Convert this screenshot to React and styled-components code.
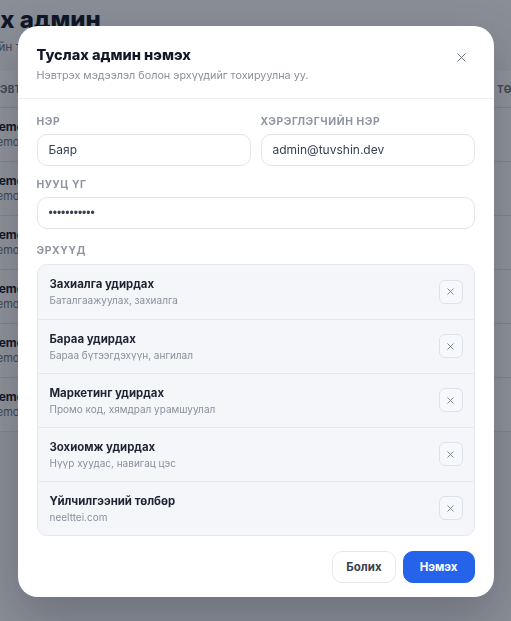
import styled, { createGlobalStyle } from 'styled-components';
import { X } from 'lucide-react';

const permissions = [
  { title: 'Захиалга удирдах', note: 'Баталгаажуулах, захиалга' },
  { title: 'Бараа удирдах', note: 'Бараа бүтээгдэхүүн, ангилал' },
  { title: 'Маркетинг удирдах', note: 'Промо код, хямдрал урамшуулал' },
  { title: 'Зохиомж удирдах', note: 'Нүүр хуудас, навигац цэс' },
  { title: 'Үйлчилгээний төлбөр', note: 'neelttei.com' },
];

const admins = [1, 2, 3, 4, 5, 6];

const GlobalStyle = createGlobalStyle`
  * { box-sizing: border-box; }
  body {
    margin: 0;
    overflow: hidden;
    background: #f6f7f9;
    font-family: Inter, 'Noto Sans', sans-serif;
  }
`;

const App = () => {
  return (
    <>
      <GlobalStyle />
      <Page>
        <PageTitle>Туслах админ</PageTitle>
        <PageSub>Админ эрхийн тохиргоо</PageSub>
        <Table>
          <HeadRow>
            <HeadCell>Нэвтрэх нэр</HeadCell>
            <HeadCell>Төлөв</HeadCell>
          </HeadRow>
          {admins.map((id) => (
            <BodyRow key={id}>
              <Avatar />
              <div>
                <RowName>Demo админ</RowName>
                <RowMail>demo@tuvshin.dev</RowMail>
              </div>
            </BodyRow>
          ))}
        </Table>
      </Page>

      <Overlay>
        <Modal>
          <Header>
            <div>
              <Title>Туслах админ нэмэх</Title>
              <Subtitle>Нэвтрэх мэдээлэл болон эрхүүдийг тохируулна уу.</Subtitle>
            </div>
            <CloseButton aria-label='Хаах'>
              <X size={15} strokeWidth={1.6} />
            </CloseButton>
          </Header>

          <Body>
            <FieldGrid>
              <Field>
                <Label>Нэр</Label>
                <Input defaultValue='Баяр' />
              </Field>
              <Field>
                <Label>Хэрэглэгчийн нэр</Label>
                <Input defaultValue='admin@tuvshin.dev' />
              </Field>
              <Field $wide>
                <Label>Нууц үг</Label>
                <Input type='password' defaultValue='12345678901' />
              </Field>
            </FieldGrid>

            <Section>
              <Label>Эрхүүд</Label>
              <PermList>
                {permissions.map((p) => (
                  <PermRow key={p.title}>
                    <div>
                      <PermTitle>{p.title}</PermTitle>
                      <PermNote>{p.note}</PermNote>
                    </div>
                    <RemoveButton aria-label='Хасах'>
                      <X size={11} strokeWidth={1.8} />
                    </RemoveButton>
                  </PermRow>
                ))}
              </PermList>
            </Section>

            <Footer>
              <Button>Болих</Button>
              <Button $primary>Нэмэх</Button>
            </Footer>
          </Body>
        </Modal>
      </Overlay>
    </>
  );
};

const Page = styled.div`
  width: 640px;
  margin-left: -72px;
  padding-top: 5px;
`;

const PageTitle = styled.h1`
  margin: 0;
  font-size: 24px;
  line-height: 30px;
  font-weight: 800;
  color: #111827;
`;

const PageSub = styled.p`
  margin: 4px 0 0;
  font-size: 12px;
  line-height: 16px;
  color: #6b7280;
`;

const Table = styled.div`
  margin-top: 16px;
  margin-left: 64px;
  background: #ffffff;
`;

const HeadRow = styled.div`
  height: 37px;
  display: grid;
  grid-template-columns: 505px auto;
  align-items: center;
  border-bottom: 1px solid #e5e7eb;
`;

const HeadCell = styled.span`
  font-size: 10px;
  font-weight: 700;
  letter-spacing: 0.05em;
  text-transform: uppercase;
  color: #6b7280;
`;

const BodyRow = styled.div`
  height: 54px;
  display: flex;
  align-items: center;
  gap: 12px;
  margin-left: -46px;
  border-bottom: 1px solid #e5e7eb;
`;

const Avatar = styled.span`
  width: 32px;
  height: 32px;
  border-radius: 50%;
  background: #e5e7eb;
`;

const RowName = styled.div`
  font-size: 12px;
  font-weight: 700;
  line-height: 16px;
  color: #111827;
`;

const RowMail = styled.div`
  font-size: 11px;
  line-height: 15px;
  color: #6b7280;
`;

const Overlay = styled.div`
  position: fixed;
  inset: 0;
  background: rgba(17, 24, 39, 0.47);
  display: flex;
  align-items: center;
  justify-content: center;
`;

const Modal = styled.div`
  width: 476px;
  background: #ffffff;
  border-radius: 20px;
  box-shadow: 0 20px 50px rgba(15, 23, 42, 0.25);
  margin-top: 1px;
`;

const Header = styled.div`
  padding: 18px 20px 15px 19px;
  display: flex;
  align-items: flex-start;
  justify-content: space-between;
  border-bottom: 1px solid #eceef2;
`;

const Title = styled.h2`
  margin: 0;
  font-size: 14.5px;
  line-height: 21px;
  font-weight: 800;
  color: #111827;
`;

const Subtitle = styled.p`
  margin: 3px 0 0;
  font-size: 10.8px;
  line-height: 15px;
  color: #8a909b;
`;

const CloseButton = styled.button`
  width: 24px;
  height: 24px;
  margin-top: 2px;
  padding: 0;
  border: none;
  background: none;
  color: #6b7280;
  display: flex;
  align-items: center;
  justify-content: center;
  cursor: pointer;
`;

const Body = styled.div`
  padding: 16px 19px 14px;
`;

const FieldGrid = styled.div`
  display: grid;
  grid-template-columns: minmax(0, 1fr) minmax(0, 1fr);
  column-gap: 10px;
  row-gap: 12px;
`;

const Field = styled.div`
  min-width: 0;
  display: flex;
  flex-direction: column;
  grid-column: ${({ $wide }) => ($wide ? '1 / -1' : 'auto')};
`;

const Label = styled.span`
  display: block;
  margin-bottom: 6px;
  font-size: 10.3px;
  line-height: 13px;
  font-weight: 700;
  letter-spacing: 0.06em;
  text-transform: uppercase;
  color: #8e94a0;
`;

const Input = styled.input`
  width: 100%;
  height: 32px;
  padding: 0 11px;
  border: 1px solid #e1e4e9;
  border-radius: 10px;
  background: #ffffff;
  font-family: ${({ type }) =>
    type === 'password' ? "'Liberation Sans', Arial, sans-serif" : "Inter, 'Noto Sans', sans-serif"};
  font-size: 12px;
  color: #374151;
  outline: none;
`;

const Section = styled.div`
  margin-top: 15px;

  ${Label} {
    margin-bottom: 7px;
  }
`;

const PermList = styled.div`
  border: 1px solid #e5e8ee;
  border-radius: 10px;
  background: #f4f6fa;
  overflow: hidden;
`;

const PermRow = styled.div`
  height: 54px;
  padding: 0 11px 0 12px;
  display: flex;
  align-items: center;
  justify-content: space-between;

  & + & {
    border-top: 1px solid #e5e8ee;
  }
`;

const PermTitle = styled.div`
  font-size: 11.4px;
  line-height: 16px;
  font-weight: 700;
  color: #1f2430;
`;

const PermNote = styled.div`
  margin-top: 2px;
  font-size: 10px;
  line-height: 13px;
  color: #8a909c;
`;

const RemoveButton = styled.button`
  width: 24px;
  height: 24px;
  padding: 0;
  border: 1px solid #dfe2e8;
  border-radius: 6px;
  background: #f7f8fb;
  color: #6b7280;
  display: flex;
  align-items: center;
  justify-content: center;
  cursor: pointer;
`;

const Footer = styled.div`
  margin-top: 15px;
  display: flex;
  justify-content: flex-end;
  gap: 7px;
`;

const Button = styled.button`
  height: 32px;
  padding: 0 ${({ $primary }) => ($primary ? '16px' : '13px')};
  border-radius: 10px;
  border: 1px solid ${({ $primary }) => ($primary ? '#2563eb' : '#e5e7eb')};
  background: ${({ $primary }) => ($primary ? '#2563eb' : '#ffffff')};
  color: ${({ $primary }) => ($primary ? '#ffffff' : '#374151')};
  font-family: Inter, 'Noto Sans', sans-serif;
  font-size: 11.5px;
  font-weight: 700;
  cursor: pointer;
`;

export default App;
